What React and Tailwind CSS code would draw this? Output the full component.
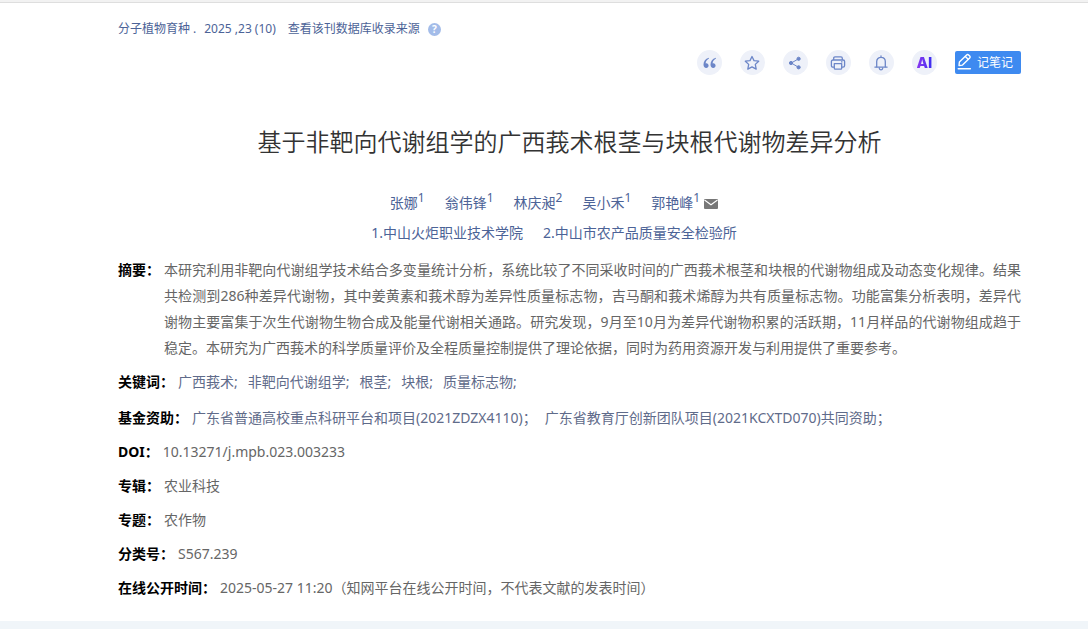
import React from 'react';

const AUTHORS = [
    { name: '张娜', org: '1' },
    { name: '翁伟锋', org: '1' },
    { name: '林庆昶', org: '2' },
    { name: '吴小禾', org: '1' },
    { name: '郭艳峰', org: '1', mail: true },
];

const ORGS = ['1.中山火炬职业技术学院', '2.中山市农产品质量安全检验所'];

const KEYWORDS = ['广西莪术', '非靶向代谢组学', '根茎', '块根', '质量标志物'];

const FUNDS = ['广东省普通高校重点科研平台和项目(2021ZDZX4110)', '广东省教育厅创新团队项目(2021KCXTD070)共同资助'];

const QuoteIcon = () => (
    <svg width="15" height="14" viewBox="0 0 14 14" fill="#6c86c8" aria-hidden="true">
        <path d="M6.200 1.800C3 2.600 1 5.200 1 8.500c0 2.100 1.100 3.400 2.700 3.400 1.400 0 2.400-1 2.400-2.400 0-1.300-1-2.300-2.200-2.300-.3 0-.6.1-.8.2.2-2 1.400-3.800 3.400-4.800z" />
        <path d="M13.200 1.800C10 2.600 8 5.200 8 8.500c0 2.100 1.100 3.400 2.700 3.400 1.400 0 2.400-1 2.400-2.400 0-1.300-1-2.300-2.200-2.300-.3 0-.6.1-.8.2.2-2 1.400-3.800 3.400-4.800z" />
    </svg>
);

const StarIcon = () => (
    <svg width="16" height="16" viewBox="0 0 16 16" fill="none" stroke="#6c86c8" strokeWidth="1.300" strokeLinejoin="round" aria-hidden="true">
        <path d="M8 1.500l2 4.100 4.700.6-3.400 3.200.9 4.700L8 11.900l-4.200 2.200.9-4.700L1.300 6.200l4.700-.6z" />
    </svg>
);

const ShareIcon = () => (
    <svg width="14" height="14" viewBox="0 0 14 14" fill="#6c86c8" stroke="#6c86c8" aria-hidden="true">
        <path d="M10.500 2.800L3.300 7l7.200 4.300" fill="none" strokeWidth="1" />
        <circle cx="10.600" cy="2.800" r="1.600" />
        <circle cx="3" cy="7" r="1.600" />
        <circle cx="10.600" cy="11.300" r="1.600" />
    </svg>
);

const PrintIcon = () => (
    <svg width="16" height="16" viewBox="0 0 16 16" fill="none" stroke="#6c86c8" strokeWidth="1.300" strokeLinejoin="round" aria-hidden="true">
        <path d="M3.700 5V3.200c0-.8.5-1.300 1.300-1.300h6c.8 0 1.300.5 1.300 1.300V5" />
        <path d="M4.200 12.200H3c-1 0-1.600-.6-1.600-1.600V6.600C1.400 5.600 2 5 3 5h10c1 0 1.600.6 1.600 1.600v4c0 1-.6 1.600-1.600 1.600h-1.200" />
        <path d="M4.300 8.700h7.400v4.600c0 .6-.3.900-.9.900H5.200c-.6 0-.9-.3-.9-.9z" />
        <path d="M11 6.900h1.500" />
    </svg>
);

const BellIcon = () => (
    <svg width="16" height="16" viewBox="0 0 16 16" fill="none" stroke="#6c86c8" strokeWidth="1.300" strokeLinecap="round" strokeLinejoin="round" aria-hidden="true">
        <path d="M8 1v1.200M3.700 11.800V6.600C3.700 4 5.500 2.300 8 2.300s4.300 1.700 4.300 4.300v5.200" />
        <path d="M1.900 12.100h12.200M6.300 13.300c.2 1 .8 1.500 1.700 1.500s1.500-.5 1.700-1.500" />
    </svg>
);

const PenIcon = () => (
    <svg width="16" height="20" viewBox="0 0 16 20" fill="none" stroke="#fff" strokeWidth="1.400" strokeLinecap="round" strokeLinejoin="round" aria-hidden="true">
        <path d="M2 12.500l.4-3.500L9.600 1.900c.6-.6 1.400-.6 2 0l1.100 1.100c.6.6.6 1.400 0 2l-7.200 7.100z" />
        <path d="M8.300 3.400l2.900 2.900M1.200 15.700h12.200" />
    </svg>
);

const MailIcon = () => (
    <svg width="14" height="10" viewBox="0 0 14 10" className="ml-1 inline-block" role="img" aria-label="通讯作者">
        <rect width="14" height="10" rx="1" fill="#777" />
        <path d="M.5 1l6.500 4.700L13.500 1" fill="none" stroke="#fff" strokeWidth="1.100" />
    </svg>
);

const TOOLS = [
    { label: '引用', icon: <QuoteIcon /> },
    { label: '收藏', icon: <StarIcon /> },
    { label: '分享', icon: <ShareIcon /> },
    { label: '打印', icon: <PrintIcon /> },
    { label: '订阅', icon: <BellIcon /> },
];

const Row = ({ label, children }) => (
    <div className="flex gap-1 leading-[26px]">
        <dt className="shrink-0 font-bold text-black">{label}：</dt>
        <dd className="min-w-0 flex-1">{children}</dd>
    </div>
);

const App = () => {
    return (
        <div className="bg-white font-['Noto_Sans','Noto_Sans_CJK_SC',sans-serif] text-sm text-[#666]">
            <div className="h-[3px] border-b border-[#dedede] bg-[#f2f2f2]" />
            <main className="pl-[118px] pr-[67px] pb-5">
                <div className="flex items-center pt-4 text-xs leading-5 text-[#4c6397]">
                    <a href="#journal">分子植物育种</a>
                    <span className="mr-2 ml-[3px]">.</span>
                    <a href="#issue">2025 ,23 (10)</a>
                    <a href="#source" className="ml-3">查看该刊数据库收录来源</a>
                    <button aria-label="帮助" className="ml-2 size-[13px] rounded-full bg-[#a3bce9] text-center text-[10px] leading-[13px] font-bold text-white">?</button>
                </div>

                <div className="mt-[11px] flex items-center justify-end gap-[18px]">
                    {TOOLS.map((tool) => (
                        <button key={tool.label} aria-label={tool.label} className="flex size-[25px] items-center justify-center rounded-full bg-[#eef1f9]">
                            {tool.icon}
                        </button>
                    ))}
                    <button className="flex size-[25px] items-center justify-center rounded-full bg-[#eef1f9]">
                        <span className="bg-linear-to-r from-[#8a35f0] to-[#3a2cf0] bg-clip-text font-[Inter,sans-serif] text-[15px] font-extrabold text-transparent">AI</span>
                    </button>
                    <button className="flex h-[23px] items-center gap-1 rounded-xs bg-[#3e8af0] pr-2 pl-[2px] text-xs text-white">
                        <PenIcon />
                        记笔记
                    </button>
                </div>

                <h1 className="mt-[47px] text-center text-2xl leading-10 font-[350] text-[#333]">基于非靶向代谢组学的广西莪术根茎与块根代谢物差异分析</h1>

                <div className="mt-[26px] flex justify-center gap-5 pr-[31px] leading-[30px] text-[#4c6397]">
                    {AUTHORS.map((author) => (
                        <span key={author.name}>
                            <a href="#author">{author.name}<sup className="text-xs">{author.org}</sup></a>
                            {author.mail && <MailIcon />}
                        </span>
                    ))}
                </div>
                <div className="flex justify-center gap-5 pr-[31px] leading-[30px] text-[#4c6397]">
                    {ORGS.map((org) => (
                        <a key={org} href="#org">{org}</a>
                    ))}
                </div>

                <dl className="mt-[9px] flex flex-col gap-2">
                    <Row label="摘要">
                        <p className="text-justify">
                            本研究利用非靶向代谢组学技术结合多变量统计分析，系统比较了不同采收时间的广西莪术根茎和块根的代谢物组成及动态变化规律。结果共检测到286种差异代谢物，其中姜黄素和莪术醇为差异性质量标志物，吉马酮和莪术烯醇为共有质量标志物。功能富集分析表明，差异代谢物主要富集于次生代谢物生物合成及能量代谢相关通路。研究发现，9月至10月为差异代谢物积累的活跃期，11月样品的代谢物组成趋于稳定。本研究为广西莪术的科学质量评价及全程质量控制提供了理论依据，同时为药用资源开发与利用提供了重要参考。
                        </p>
                    </Row>
                    <Row label="关键词">
                        <span className="flex flex-wrap gap-x-[10px] pb-[2px] text-[#5f6b8a]">
                            {KEYWORDS.map((word) => (
                                <a key={word} href="#keyword">{word};</a>
                            ))}
                        </span>
                    </Row>
                    <Row label="基金资助">
                        <span className="flex flex-wrap gap-x-2 text-[#5f6b8a]">
                            {FUNDS.map((fund) => (
                                <a key={fund} href="#fund">{fund}；</a>
                            ))}
                        </span>
                    </Row>
                    <Row label="DOI">10.13271/j.mpb.023.003233</Row>
                    <Row label="专辑">农业科技</Row>
                    <Row label="专题">农作物</Row>
                    <Row label="分类号">S567.239</Row>
                    <Row label="在线公开时间">2025-05-27 11:20（知网平台在线公开时间，不代表文献的发表时间）</Row>
                </dl>
            </main>
            <div className="h-2 bg-[#f0f5f9]" />
        </div>
    );
};

export default App;
